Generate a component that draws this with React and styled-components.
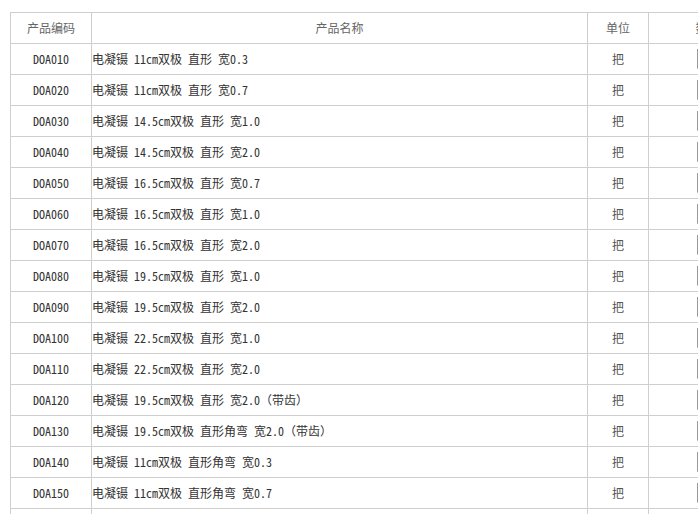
import React from "react";
import styled, { createGlobalStyle } from "styled-components";

const GlobalStyle = createGlobalStyle`
  html, body {
    margin: 0;
    padding: 0;
    background: #fff;
    overflow: hidden;
  }
  body {
    font-family: "Noto Sans Mono CJK SC", "Liberation Mono", "Noto Sans CJK SC", monospace;
    font-size: 12px;
    color: #333;
  }
`;

const Page = styled.div`
  padding: 12px 0 0 10px;
  width: 900px;
`;

const Table = styled.table`
  border-collapse: collapse;
  table-layout: fixed;
  width: 756px;
`;

const Col = styled.col`
  width: ${(p) => p.$w}px;
`;

const HeadCell = styled.th`
  height: 29px;
  padding: 0 0 1px;
  border: 1px solid #cfcfcf;
  font-weight: normal;
  color: #666;
  text-align: center;
  font-family: "Noto Sans CJK SC", sans-serif;
  font-size: 12px;
`;

const Cell = styled.td`
  height: 28px;
  padding: 0 0 2px;
  border: 1px solid #cfcfcf;
  text-align: ${(p) => p.$align || "center"};
  color: ${(p) => p.$color || "#333"};
  white-space: nowrap;
  overflow: hidden;
`;

const Unit = styled.span`
  font-family: "Noto Sans CJK SC", sans-serif;
  color: #555;
`;

const QtyCell = styled.td`
  height: 30px;
  padding: 0 0 0 48px;
  border: 1px solid #cfcfcf;
  vertical-align: middle;
`;

const QtyInput = styled.input`
  display: block;
  box-sizing: border-box;
  width: 40px;
  height: 20px;
  margin: 0;
  border: 1px solid #999;
  border-right-color: #ddd;
  border-bottom-color: #ddd;
  padding: 0;
`;

const rows = [
  ["DOA010", "电凝镊 11cm双极 直形 宽0.3"],
  ["DOA020", "电凝镊 11cm双极 直形 宽0.7"],
  ["DOA030", "电凝镊 14.5cm双极 直形 宽1.0"],
  ["DOA040", "电凝镊 14.5cm双极 直形 宽2.0"],
  ["DOA050", "电凝镊 16.5cm双极 直形 宽0.7"],
  ["DOA060", "电凝镊 16.5cm双极 直形 宽1.0"],
  ["DOA070", "电凝镊 16.5cm双极 直形 宽2.0"],
  ["DOA080", "电凝镊 19.5cm双极 直形 宽1.0"],
  ["DOA090", "电凝镊 19.5cm双极 直形 宽2.0"],
  ["DOA100", "电凝镊 22.5cm双极 直形 宽1.0"],
  ["DOA110", "电凝镊 22.5cm双极 直形 宽2.0"],
  ["DOA120", "电凝镊 19.5cm双极 直形 宽2.0（带齿）"],
  ["DOA130", "电凝镊 19.5cm双极 直形角弯 宽2.0（带齿）"],
  ["DOA140", "电凝镊 11cm双极 直形角弯 宽0.3"],
  ["DOA150", "电凝镊 11cm双极 直形角弯 宽0.7"],
  ["DOA160", "电凝镊 14.5cm双极 直形角弯 宽1.0"],
];

export default function App() {
  return (
    <>
      <GlobalStyle />
      <Page>
        <Table>
          <colgroup>
            <Col $w={81} />
            <Col $w={496} />
            <Col $w={61} />
            <Col $w={118} />
          </colgroup>
          <thead>
            <tr>
              <HeadCell>产品编码</HeadCell>
              <HeadCell>产品名称</HeadCell>
              <HeadCell>单位</HeadCell>
              <HeadCell>数量</HeadCell>
            </tr>
          </thead>
          <tbody>
            {rows.map(([code, name]) => (
              <tr key={code}>
                <Cell>{code}</Cell>
                <Cell $align="left">{name}</Cell>
                <Cell>
                  <Unit>把</Unit>
                </Cell>
                <QtyCell>
                  <QtyInput type="text" />
                </QtyCell>
              </tr>
            ))}
          </tbody>
        </Table>
      </Page>
    </>
  );
}
